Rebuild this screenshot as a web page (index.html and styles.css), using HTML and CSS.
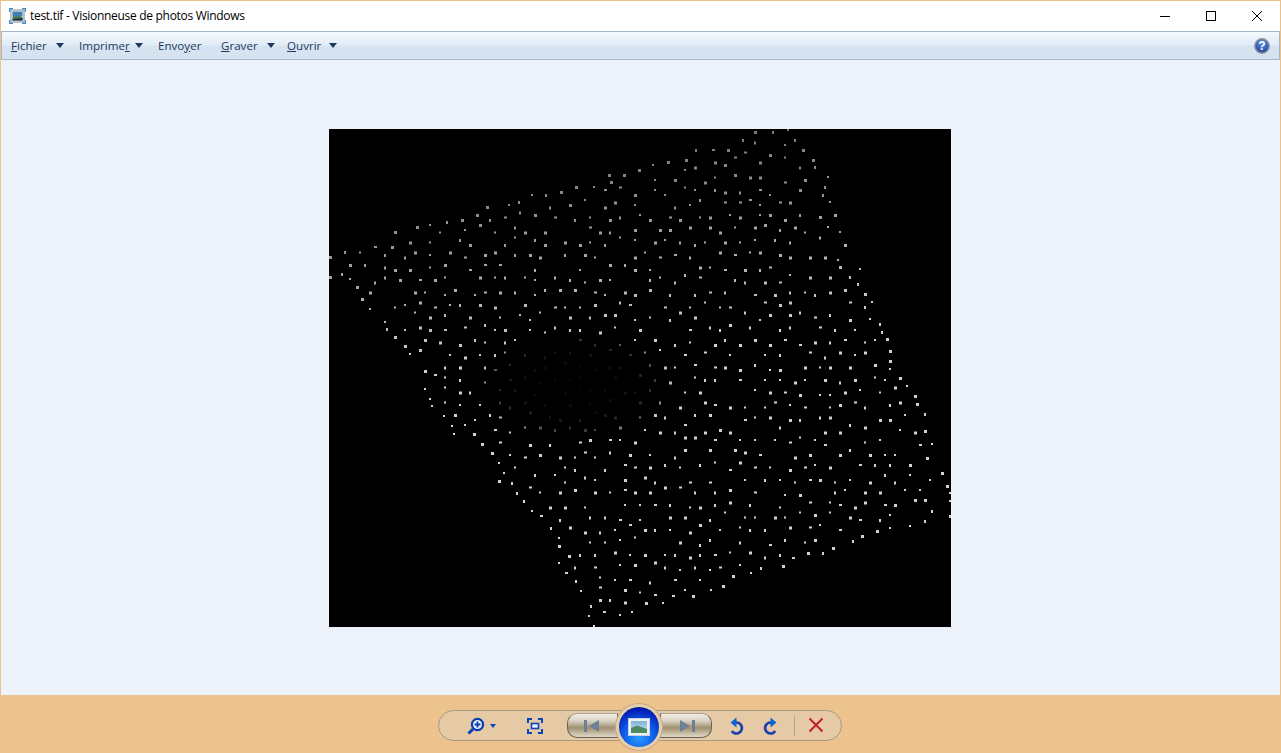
FILE: index.html
```html
<!DOCTYPE html>
<html lang="fr">
<head>
    <meta charset="UTF-8">
    <title>test.tif - Visionneuse de photos Windows</title>
    <link rel="stylesheet" href="styles.css">
</head>
<body>
<div class="window">

    <div class="titlebar">
        <svg class="app-icon" width="17" height="16" viewBox="0 0 17 16">
            <rect x="2" y="2" width="13" height="12" fill="#f4f7f9" stroke="#7d8b99"/>
            <rect x="3.5" y="3.5" width="10" height="5" fill="#3f7fb8"/>
            <path d="M3.5 8.5 L8 7 L13.5 9 V12.5 H3.5 Z" fill="#4a7d5c"/>
            <path d="M3.5 11 L13.5 10 V12.5 H3.5 Z" fill="#20303c"/>
            <path d="M0.5 4 V0.5 H4 M13 0.5 H16.5 V4 M16.5 12 V15.5 H13 M4 15.5 H0.5 V12" fill="none" stroke="#3f8ac4" stroke-width="1.4"/>
        </svg>
        <span class="title-text">test.tif - Visionneuse de photos Windows</span>
        <div class="win-buttons">
            <svg width="12" height="12" viewBox="0 0 12 12"><path d="M1 6.5 H11" stroke="#000" fill="none"/></svg>
            <svg width="12" height="12" viewBox="0 0 12 12"><rect x="1.5" y="1.5" width="9" height="9" stroke="#000" fill="none"/></svg>
            <svg width="12" height="12" viewBox="0 0 12 12"><path d="M1 1 L11 11 M11 1 L1 11" stroke="#000" fill="none"/></svg>
        </div>
    </div>

    <div class="toolbar">
        <div class="menu menu-fichier"><span><u>F</u>ichier</span><i class="arrow"></i></div>
        <div class="menu menu-imprimer"><span>Imprime<u>r</u></span><i class="arrow"></i></div>
        <div class="menu menu-envoyer"><span>Envo<u>y</u>er</span></div>
        <div class="menu menu-graver"><span><u>G</u>raver</span><i class="arrow"></i></div>
        <div class="menu menu-ouvrir"><span><u>O</u>uvrir</span><i class="arrow"></i></div>
        <svg class="help" width="18" height="18" viewBox="0 0 18 18">
            <defs>
                <radialGradient id="helpFill" cx="0.5" cy="0.3" r="0.8">
                    <stop offset="0" stop-color="#5f8ee0"/>
                    <stop offset="1" stop-color="#17399a"/>
                </radialGradient>
            </defs>
            <circle cx="9" cy="9" r="7.2" fill="url(#helpFill)" stroke="#8d939c" stroke-width="1.5"/>
            <text x="9" y="13" class="help-mark">?</text>
        </svg>
    </div>

    <div class="viewer">
        <canvas id="photo" class="photo" width="622" height="498"></canvas>
    </div>

    <div class="controls">
        <div class="pill">
            <svg class="zoom-icon" width="19" height="18" viewBox="0 0 19 18">
                <circle cx="10.5" cy="7.5" r="5.6" fill="#e8eefb" stroke="#0a3fb0" stroke-width="2.2"/>
                <path d="M7.5 7.5 H13.5 M10.5 4.5 V10.5" stroke="#0a3fb0" stroke-width="1.8" fill="none"/>
                <path d="M6 12 L1.5 16.5" stroke="#0a3fb0" stroke-width="3" fill="none"/>
            </svg>
            <i class="zoom-arrow"></i>
            <svg class="fit-icon" width="16" height="16" viewBox="0 0 16 16">
                <path d="M1 5 V1 H5 M11 1 H15 V5 M15 11 V15 H11 M5 15 H1 V11" fill="none" stroke="#0b45b8" stroke-width="2"/>
                <rect x="4.5" y="5.5" width="7" height="5" fill="#e8eefb" stroke="#0b45b8" stroke-width="1.6"/>
            </svg>
            <div class="nav-btn nav-prev">
                <svg width="16" height="12" viewBox="0 0 16 12"><path d="M0 0 H3 V12 H0 Z M15 0 V12 L5 6 Z" fill="#6f8197"/></svg>
            </div>
            <div class="orb">
                <svg width="22" height="18" viewBox="0 0 22 18">
                    <defs>
                        <linearGradient id="orbSky" x1="0" y1="0" x2="0" y2="1">
                            <stop offset="0" stop-color="#7fb4d8"/>
                            <stop offset="1" stop-color="#cfe2ea"/>
                        </linearGradient>
                    </defs>
                    <rect x="0.5" y="0.5" width="21" height="17" fill="#eef2f6" stroke="#c7d2e4"/>
                    <rect x="3" y="3" width="16" height="12" fill="url(#orbSky)"/>
                    <path d="M3 10 L9 7.5 L19 11 V15 H3 Z" fill="#4d8a62"/>
                </svg>
            </div>
            <div class="nav-btn nav-next">
                <svg width="16" height="12" viewBox="0 0 16 12"><path d="M1 0 V12 L11 6 Z M13 0 H16 V12 H13 Z" fill="#6f8197"/></svg>
            </div>
            <svg class="rot-left" width="16" height="18" viewBox="0 0 16 18">
                <path d="M6 5.5 H7.5 A5.5 5.5 0 1 1 2.8 14" fill="none" stroke="#1a3fae" stroke-width="2.6"/>
                <path d="M1.5 5.5 L7.5 0.5 V10.5 Z" fill="#0e63d0"/>
            </svg>
            <svg class="rot-right" width="16" height="18" viewBox="0 0 16 18">
                <path d="M10 5.5 H8.5 A5.5 5.5 0 1 0 13.2 14" fill="none" stroke="#1a3fae" stroke-width="2.6"/>
                <path d="M14.5 5.5 L8.5 0.5 V10.5 Z" fill="#0e63d0"/>
            </svg>
            <i class="sep"></i>
            <svg class="del-icon" width="16" height="16" viewBox="0 0 16 16">
                <path d="M1.5 1.5 L14.5 14.5 M14.5 1.5 L1.5 14.5" stroke="#c0202e" stroke-width="2" fill="none"/>
            </svg>
        </div>
    </div>

</div>
<script src="dots.js"></script>
</body>
</html>
```
FILE: styles.css
```css
* {
    box-sizing: border-box;
}
body {
    margin: 0;
    font-family: "Open Sans", "Noto Sans", sans-serif;
    font-size: 12px;
}
.window {
    width: 1281px;
    height: 753px;
    display: flex;
    flex-direction: column;
    border: 1px solid #ebc38a;
    border-bottom: none;
    background: #eef3fb;
}
.titlebar {
    height: 30px;
    flex: none;
    display: flex;
    align-items: center;
    background: #fff;
    padding-left: 8px;
}
.app-icon {
    margin-right: 4px;
}
.title-text {
    color: #000;
    font-size: 12px;
    letter-spacing: -0.3px;
    padding-bottom: 1px;
}
.win-buttons {
    margin-left: auto;
    display: flex;
    gap: 34px;
    padding-right: 17px;
}
.toolbar {
    height: 29px;
    flex: none;
    display: flex;
    align-items: center;
    border: 1px solid #a8b6ca;
    background: linear-gradient(#f4f9fd, #e2edf7 45%, #d6e4f1 55%, #d5e3f0);
    color: #1e395b;
    padding-left: 9px;
}
.menu {
    display: flex;
    align-items: center;
}
.menu-fichier { width: 68px; }
.menu-imprimer { width: 79px; }
.menu-envoyer { width: 63px; }
.menu-graver { width: 66px; }
.menu-ouvrir { width: 60px; }
.menu span {
    font-size: 11.6px;
    padding-bottom: 1px;
}
.arrow {
    margin-left: 9px;
    border-top: 5px solid #1e395b;
    border-left: 4px solid transparent;
    border-right: 4px solid transparent;
}
.menu-imprimer .arrow {
    margin-left: 5px;
}
.menu-ouvrir .arrow {
    margin-left: 8px;
}
.help {
    margin-left: auto;
    margin-right: 8px;
}
.help-mark {
    font-family: "Liberation Sans", sans-serif;
    font-size: 12px;
    font-weight: bold;
    fill: #fff;
    text-anchor: middle;
}
.viewer {
    flex: 1;
    display: flex;
    align-items: center;
    justify-content: center;
    padding-right: 1px;
}
.photo {
    display: block;
    background: #000;
}
.controls {
    height: 58px;
    flex: none;
    margin: 0 -1px;
    padding: 3px 1px 0 0;
    display: flex;
    align-items: center;
    justify-content: center;
    background: #ecc28d;
}
.pill {
    width: 404px;
    height: 31px;
    display: flex;
    align-items: center;
    border: 1px solid #a89a85;
    border-radius: 16px;
    background: #e6caa5;
}
.zoom-icon {
    margin-left: 28px;
}
.zoom-arrow {
    margin-left: 4px;
    border-top: 4px solid #0b45b8;
    border-left: 3.5px solid transparent;
    border-right: 3.5px solid transparent;
}
.fit-icon {
    margin-left: 31px;
}
.nav-btn {
    height: 25px;
    display: flex;
    align-items: center;
    justify-content: center;
    border: 1px solid #6a6256;
    border-top-color: #a8a294;
    background: linear-gradient(#f1eee6, #d8d2c2 30%, #9f9070 60%, #c9c0aa 85%, #ddd6c6);
}
.nav-prev {
    width: 51px;
    margin-left: 24px;
    border-radius: 10px 0 0 10px;
    padding-right: 2px;
}
.nav-next {
    width: 52px;
    border-radius: 0 10px 10px 0;
    padding-left: 2px;
}
.orb {
    width: 40px;
    height: 40px;
    margin: 0 1px;
    position: relative;
    top: 1px;
    flex: none;
    display: flex;
    align-items: center;
    justify-content: center;
    border-radius: 50%;
    background: radial-gradient(circle at 50% 76%, #2d9bff 0, #0b5ae6 45%, #0320b8 75%, #02127f 100%);
    box-shadow: 0 0 0 3px #e7cfae, 0 0 0 4px #c9ab86;
}
.rot-left {
    margin-left: 17px;
}
.rot-right {
    margin-left: 17px;
}
.sep {
    width: 1px;
    height: 20px;
    margin-left: 16px;
    background: #b5a68f;
}
.del-icon {
    margin-left: 13px;
    position: relative;
    top: -1px;
}
```
FILE: dots.js
```js
// edge dots read off the picture, in page coordinates, going clockwise
const edge = [
    [330,257],[345,252],[375,247],[392,247],[395,232],[417,227],[430,225],[447,222],[462,220],[477,215],
    [487,207],[509,205],[519,202],[532,195],[546,195],[561,192],[576,187],[594,187],[611,182],[609,175],
    [624,175],[639,170],[653,165],[668,162],[686,160],[696,150],[713,150],[728,150],[743,140],[755,132],
    [773,132],[788,130],[795,140],[803,150],[813,160],[815,167],[828,177],[825,187],[823,195],[830,202],
    [835,215],[820,217],[828,227],[840,232],[845,245],[838,260],[840,267],[860,269],[850,277],[858,284],
    [865,294],[872,302],[865,307],[870,319],[880,324],[882,332],[887,339],[890,351],[890,361],[890,369],
    [900,378],[907,386],[915,396],[917,404],[925,414],[925,431],[932,444],[927,458],[942,473],[947,486],
    [950,493],[950,501],[950,516],[932,511],[925,521],[910,526],[890,528],[877,531],[862,536],[853,541],
    [833,548],[823,553],[808,553],[793,558],[783,566],[761,568],[751,573],[733,576],[723,586],[711,590],
    [693,596],[673,596],[663,603],[646,603],[632,612],[620,615],[604,612],[594,626],[589,616],[591,606],
    [581,591],[576,581],[566,573],[559,563],[569,556],[559,546],[559,538],[551,528],[541,516],[532,511],
    [524,501],[517,493],[512,483],[499,481],[504,473],[499,463],[492,453],[482,444],[474,434],[454,434],
    [452,426],[444,416],[432,406],[430,399],[425,389],[425,371],[410,354],[405,346],[395,337],[387,329],
    [385,322],[370,309],[362,299],[357,287],[350,279],[342,274],[330,277]
];

const ox = 329, oy = 129;
const ctx = document.getElementById('photo').getContext('2d');
const placed = edge.slice();

let seed = 4711;
function rnd() {
    seed = (seed * 1664525 + 1013904223) % 4294967296;
    return seed / 4294967296;
}

function inside(x, y) {
    let hit = false;
    for (let i = 0, j = edge.length - 1; i < edge.length; j = i++) {
        const a = edge[i], b = edge[j];
        if ((a[1] > y) !== (b[1] > y) && x < (b[0] - a[0]) * (y - a[1]) / (b[1] - a[1]) + a[0]) {
            hit = !hit;
        }
    }
    return hit;
}

function crowded(x, y) {
    return placed.some(p => Math.hypot(p[0] - x, p[1] - y) < 10);
}

// dim along the upper left side, almost black round the middle
function level(x, y) {
    const d = ((x - 575) / 80) ** 2 + ((y - 385) / 45) ** 2;
    let v = 210;
    const top = (y - 150) + (x - 330) * 0.12;
    if (top < 230) v = 105 + top * 0.45;
    if (d < 1) v = 10 + 45 * d * d;
    else if (d < 1.5) v = Math.min(v, 55 + (d - 1) * 320);
    return Math.round(Math.min(v, 210));
}

function dot(x, y) {
    const v = level(x, y);
    const k = rnd();
    let w = 2, h = 2;
    if (k < 0.35) { w = 3; h = 3; }
    else if (k < 0.5) { w = 3; h = 2; }
    else if (k < 0.7) { w = 2; h = 3; }
    ctx.fillStyle = 'rgb(' + v + ',' + v + ',' + v + ')';
    ctx.fillRect(x - ox - 1, y - oy - 1, w, h);
}

edge.forEach(p => dot(p[0], p[1]));

for (let row = 0; row < 40; row++) {
    for (let col = 0; col < 46; col++) {
        const x = 329 + col * 15 + (row % 2) * 7.5 + (rnd() - 0.5) * 9;
        const y = 129 + row * 12.5 + (rnd() - 0.5) * 8;
        const sx = Math.round(x / 5) * 5;
        const sy = Math.round(y / 2.5) * 2.5;
        if (inside(sx, sy) && !crowded(sx, sy)) {
            placed.push([sx, sy]);
            dot(sx, sy);
        }
    }
}
```
